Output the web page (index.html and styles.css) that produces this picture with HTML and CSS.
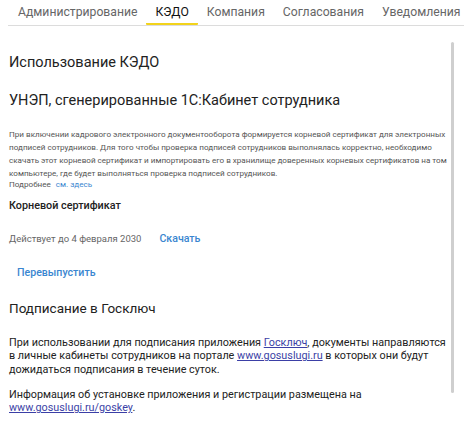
FILE: index.html
```html
<!DOCTYPE html>
<html lang="ru">
<head>
<meta charset="utf-8">
<link rel="stylesheet" href="styles.css">
</head>
<body>
<div class="page">
  <nav class="tabs">
    <div class="tab first">Администрирование</div>
    <div class="tab active">КЭДО</div>
    <div class="tab">Компания</div>
    <div class="tab">Согласования</div>
    <div class="tab">Уведомления</div>
  </nav>
  <div class="content">
    <main class="body">
      <h1 class="h-main">Использование КЭДО</h1>
      <h2 class="h-sub">УНЭП, сгенерированные 1С:Кабинет сотрудника</h2>
      <p class="note">При включении кадрового электронного документооборота формируется корневой сертификат для электронных подписей сотрудников. Для того чтобы проверка подписей сотрудников выполнялась корректно, необходимо скачать этот корневой сертификат и импортировать его в хранилище доверенных корневых сертификатов на том компьютере, где будет выполняться проверка подписей сотрудников.</p>
      <p class="more">Подробнее <a class="lnk-small">см. здесь</a></p>
      <h3 class="h-cert">Корневой сертификат</h3>
      <div class="valid">
        <span class="valid-text">Действует до 4 февраля 2030</span>
        <a class="btn-link">Скачать</a>
      </div>
      <div class="reissue"><a class="btn-link">Перевыпустить</a></div>
      <h1 class="h-main h-gos">Подписание в Госключ</h1>
      <p class="text">При использовании для подписания приложения <a class="ulink">Госключ</a>, документы направляются в личные кабинеты сотрудников на портале <a class="ulink">www.gosuslugi.ru</a> в которых они будут дожидаться подписания в течение суток.</p>
      <p class="text">Информация об установке приложения и регистрации размещена на <a class="ulink">www.gosuslugi.ru/goskey</a>.</p>
    </main>
    <div class="scrollbar"></div>
  </div>
</div>
</body>
</html>
```

FILE: styles.css
```css
html, body {
  margin: 0;
  padding: 0;
  background: #fff;
}
body {
  font-family: Roboto, "Noto Sans", sans-serif;
  color: #222;
  width: 464px;
  height: 442px;
  overflow: hidden;
}
.page {
  padding: 0 0 0 8px;
}
.tabs {
  display: flex;
  white-space: nowrap;
  overflow: hidden;
  border-bottom: 1px solid #dcdcdc;
  height: 25px;
}
.tab {
  flex: none;
  padding: 4px 9px 0;
  font-size: 12.2px;
  line-height: 16px;
  color: #666;
  box-sizing: border-box;
  height: 25px;
}
.tab.first {
  padding-left: 10px;
}
.tab.active {
  color: #111;
  border-bottom: 2px solid #f2d31b;
  border-radius: 1px;
}
.content {
  display: flex;
}
.body {
  flex: 1;
  min-width: 0;
  padding: 0 0 0 1px;
}
.scrollbar {
  flex: none;
  width: 3px;
  margin: 16px 10px 0 0;
  height: 351px;
  background: #cfcfcf;
  border-radius: 2px;
}
.h-main {
  font-size: 14.5px;
  font-weight: 400;
  margin: 28px 0 0;
  line-height: 18px;
  color: #222;
}
.h-sub {
  font-size: 14.5px;
  font-weight: 400;
  margin: 20px 0 0;
  line-height: 18px;
  color: #222;
}
.note {
  font-size: 8.1px;
  line-height: 13px;
  color: #555;
  margin: 18px 0 0;
}
.more {
  font-size: 8.1px;
  line-height: 11px;
  color: #555;
  margin: -1px 0 0;
}
.lnk-small {
  color: #3a86d0;
  margin-left: 3px;
}
.h-cert {
  font-size: 10.8px;
  font-weight: 500;
  margin: 8px 0 0;
  line-height: 15px;
  color: #222;
}
.valid {
  display: flex;
  align-items: baseline;
  gap: 18px;
  margin-top: 18px;
  line-height: 15px;
}
.valid-text {
  font-size: 9.5px;
  color: #666;
}
.btn-link {
  font-size: 10.6px;
  font-weight: 500;
  color: #3a86d0;
}
.reissue {
  margin-top: 17px;
  padding-left: 8px;
  line-height: 15px;
}
.h-gos {
  font-size: 13.5px;
  margin-top: 19px;
}
.text {
  font-size: 10.8px;
  line-height: 13.3px;
  color: #222;
  margin: 19px 0 0;
}
.text + .text {
  margin-top: 12px;
}
.ulink {
  color: #3b3fa6;
  text-decoration: underline;
}
```
